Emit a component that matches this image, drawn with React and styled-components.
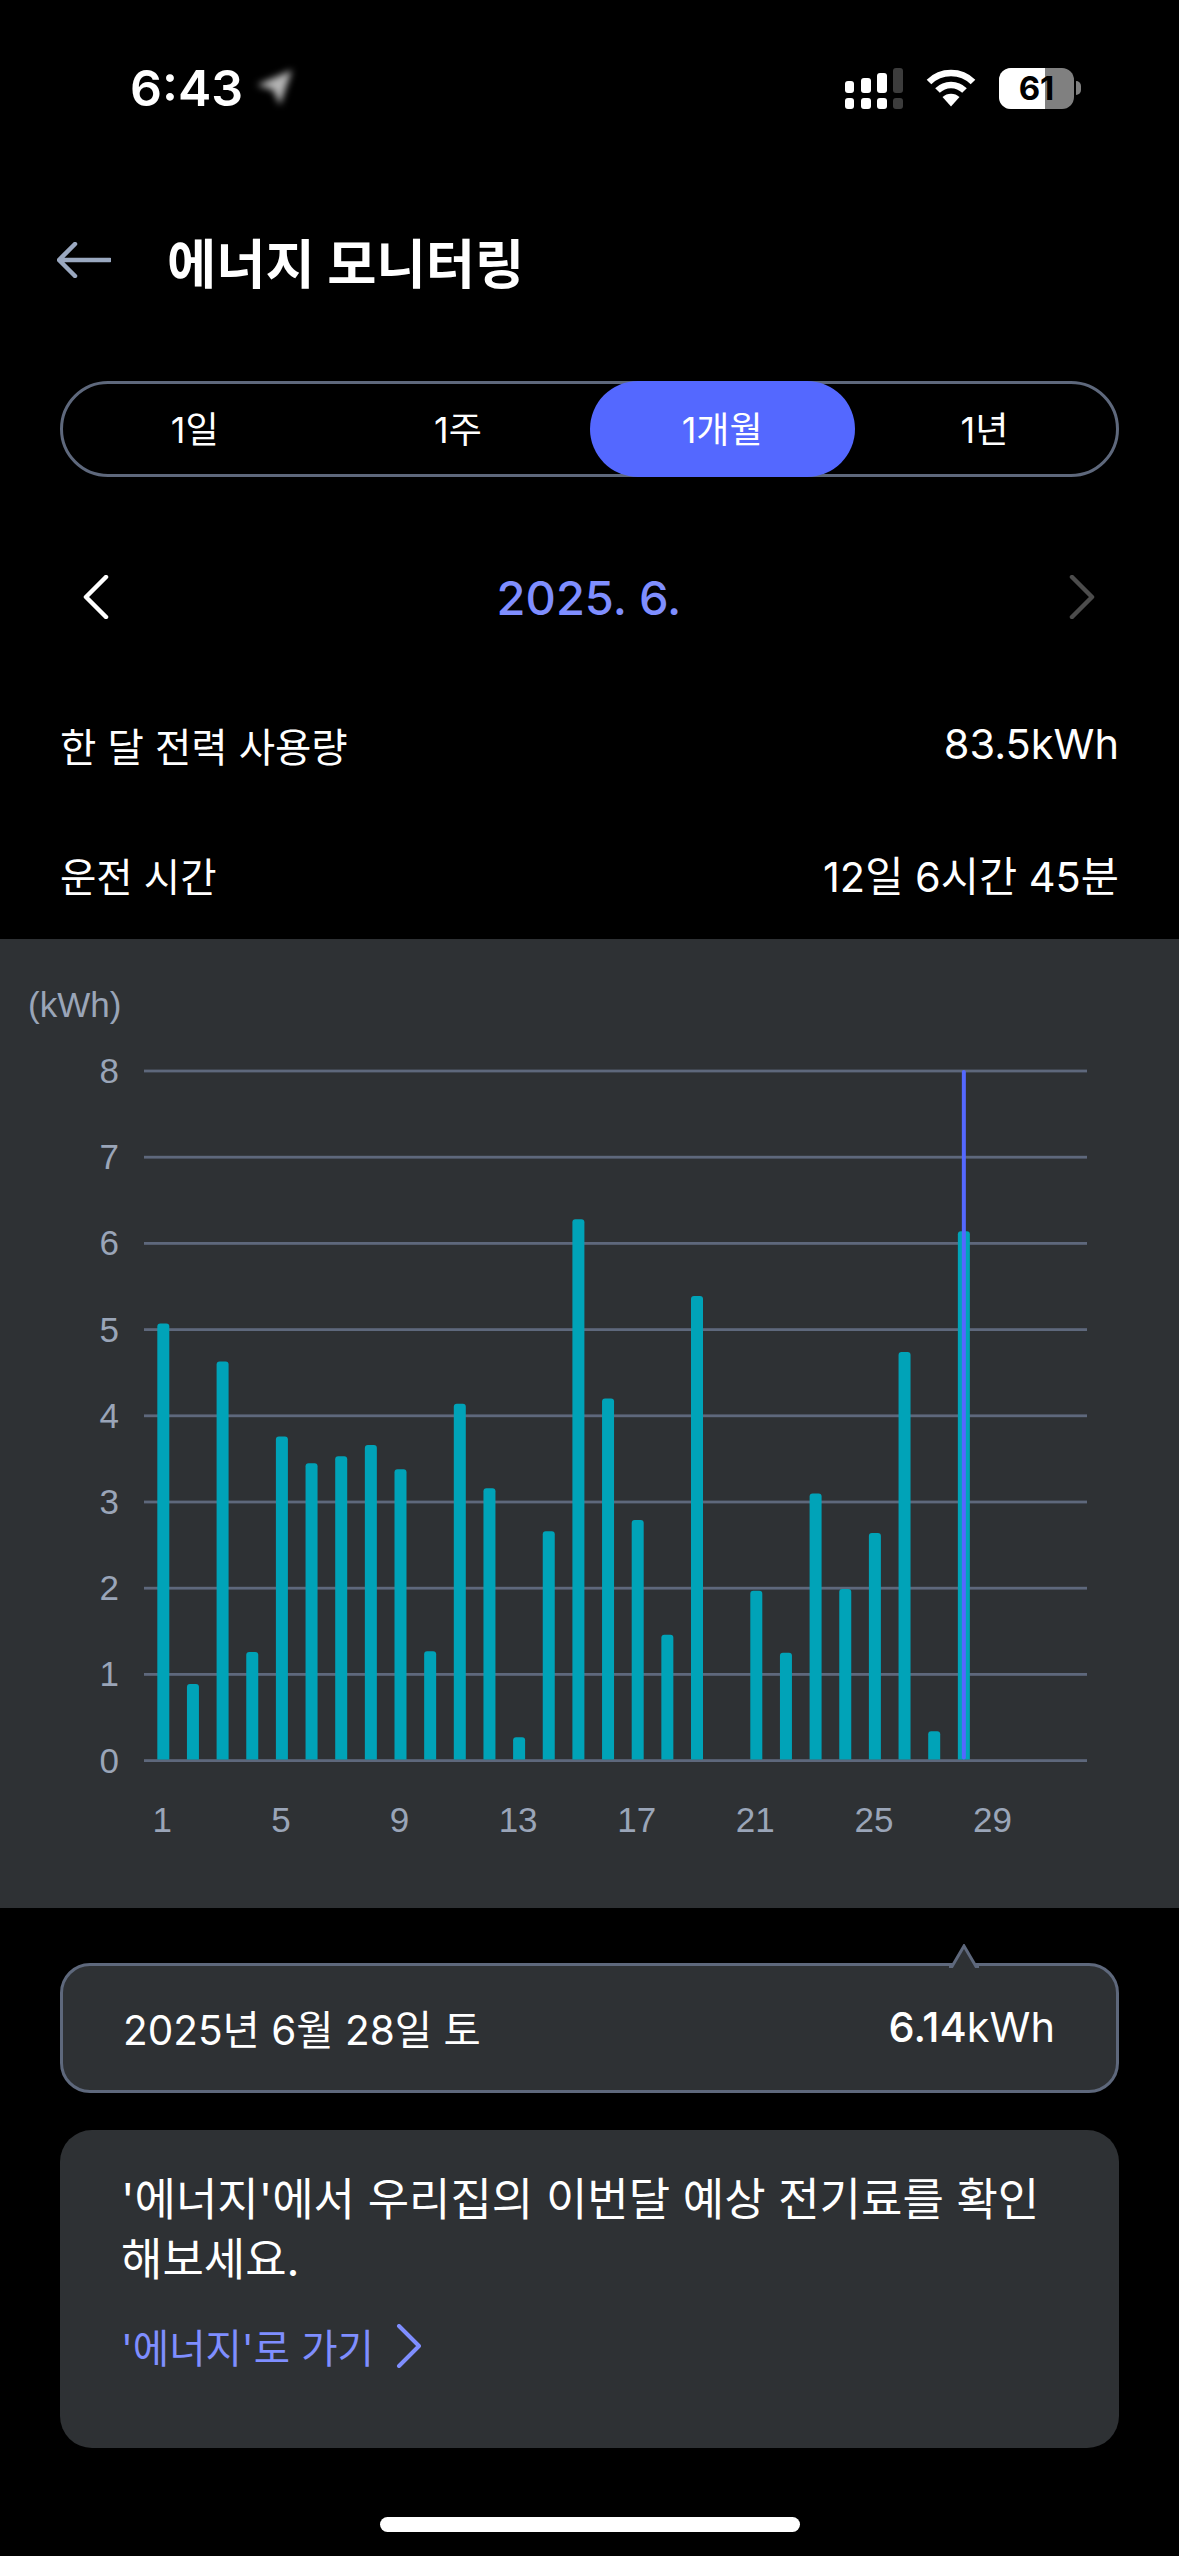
import styled, { createGlobalStyle } from "styled-components";

// Colors
const panel = "#2e3134";
const line = "#5e687c";
const blue = "#5468ff";
const lightBlue = "#7f8eff";
const muted = "#9aa5b8";
const teal = "#00a3b8";

const usage = [
  5.07, 0.89, 4.63, 1.26, 3.76, 3.45, 3.53, 3.66, 3.38, 1.27, 4.14, 3.16, 0.27, 2.66, 6.28, 4.2,
  2.79, 1.46, 5.39, 0, 1.97, 1.25, 3.1, 1.99, 2.64, 4.74, 0.34, 6.14,
];
const ticks = [0, 1, 2, 3, 4, 5, 6, 7, 8];
const days = [1, 5, 9, 13, 17, 21, 25, 29];
const tabs = ["1일", "1주", "1개월", "1년"];

// chart geometry, in px inside the panel's svg
const TOP = 44;
const UNIT = 86.2;
const BASE = TOP + UNIT * 8;
const dayX = (d) => 163.3 + 29.65 * (d - 1);

const Chart = () => (
  <ChartSvg viewBox="0 0 1179 881">
    {ticks.map((t) => (
      <g key={t}>
        <rect x="144" y={BASE - t * UNIT - 1.4} width="943" height="2.8" fill={line} />
        <YLabel x="119" y={BASE - t * UNIT + 12}>
          {t}
        </YLabel>
      </g>
    ))}
    {usage.map((v, i) =>
      v > 0 ? (
        <path
          key={i}
          fill={teal}
          d={`M${dayX(i + 1) - 6} ${BASE - 1}V${BASE - v * UNIT + 3}q0 -3 3 -3h6q3 0 3 3V${BASE - 1}z`}
        />
      ) : null
    )}
    <rect x={dayX(28) - 2} y={TOP - 1} width="4" height={UNIT * 8} rx="2" fill={blue} />
    {days.map((d) => (
      <XLabel key={d} x={dayX(d) - 1} y={BASE + 71}>
        {d}
      </XLabel>
    ))}
  </ChartSvg>
);

const App = () => {
  return (
    <Screen>
      <GlobalStyle />
      <StatusBar>
        <Clock>
          <Time>6:43</Time>
          <Blurred width="44" height="44" viewBox="0 0 44 44">
            <path d="M39 4 L4 19 L20 24 L27 39 Z" fill="#b4b4b4" />
          </Blurred>
        </Clock>
        <StatusIcons>
          <svg width="58" height="41" viewBox="0 0 58 41">
            <g fill="#fff">
              <rect x="0" y="13" width="9" height="12" rx="3" />
              <rect x="16" y="10" width="10" height="15" rx="3" />
              <rect x="32" y="5" width="10" height="20" rx="3" />
              <rect x="0" y="30" width="9" height="11" rx="3" />
              <rect x="16" y="30" width="10" height="11" rx="3" />
              <rect x="32" y="30" width="10" height="11" rx="3" />
            </g>
            <g fill="#3c3c3c">
              <rect x="48" y="0" width="10" height="25" rx="3" />
              <rect x="48" y="30" width="10" height="11" rx="3" />
            </g>
          </svg>
          <svg width="50" height="38" viewBox="0 0 50 38">
            <g fill="none" stroke="#fff" strokeWidth="6.5">
              <path d="M3 13 C15 1 35 1 47 13" />
              <path d="M11.5 21.5 C19 14 31 14 38.5 21.5" />
            </g>
            <path d="M16.5 28 C21 23.5 29 23.5 33.5 28 L25 37.5 Z" fill="#fff" />
          </svg>
          <Battery>
            <BatteryBody>
              <BatteryFill />
              <BatteryText>61</BatteryText>
            </BatteryBody>
            <BatteryNub />
          </Battery>
        </StatusIcons>
      </StatusBar>

      <Header>
        <svg width="54" height="36" viewBox="0 0 54 36">
          <path
            d="M18 2 L2 18 L18 34 M3 18 H53"
            fill="none"
            stroke="#9aa8c0"
            strokeWidth="4.5"
            strokeLinecap="round"
            strokeLinejoin="round"
          />
        </svg>
        <Title>에너지 모니터링</Title>
      </Header>

      <Tabs>
        {tabs.map((t) => (
          <Tab key={t} $active={t === "1개월"}>
            {t}
          </Tab>
        ))}
      </Tabs>

      <DateRow>
        <svg width="26" height="44" viewBox="0 0 26 44">
          <path
            d="M23 2 L3 22 L23 42"
            fill="none"
            stroke="#fff"
            strokeWidth="4.5"
            strokeLinecap="round"
            strokeLinejoin="round"
          />
        </svg>
        <DateText>2025. 6.</DateText>
        <svg width="26" height="44" viewBox="0 0 26 44">
          <path
            d="M3 2 L23 22 L3 42"
            fill="none"
            stroke="#4c4c4c"
            strokeWidth="4.5"
            strokeLinecap="round"
            strokeLinejoin="round"
          />
        </svg>
      </DateRow>

      <Summary>
        <SummaryRow>
          <SummaryLabel>한 달 전력 사용량</SummaryLabel>
          <SummaryValue>83.5kWh</SummaryValue>
        </SummaryRow>
        <SummaryRow>
          <SummaryLabel>운전 시간</SummaryLabel>
          <SummaryValue>12일 6시간 45분</SummaryValue>
        </SummaryRow>
      </Summary>

      <Panel>
        <UnitLabel>(kWh)</UnitLabel>
        <Chart />
      </Panel>

      <Tooltip>
        <TooltipArrow width="30" height="24" viewBox="0 0 30 24">
          <path d="M0 22.5 H3 L15 2 L27 22.5 H30 V24 H0 Z" fill={panel} />
          <path d="M0 22.5 H3 L15 2 L27 22.5 H30" fill="none" stroke={line} strokeWidth="3" />
        </TooltipArrow>
        <TooltipDate>2025년 6월 28일 토</TooltipDate>
        <TooltipValue>
          <Strong>6.14</Strong>kWh
        </TooltipValue>
      </Tooltip>

      <InfoCard>
        <InfoText>'에너지'에서 우리집의 이번달 예상 전기료를 확인 해보세요.</InfoText>
        <InfoLink>
          '에너지'로 가기
          <svg width="26" height="44" viewBox="0 0 26 44">
            <path
              d="M3 2 L23 22 L3 42"
              fill="none"
              stroke={lightBlue}
              strokeWidth="4"
              strokeLinecap="round"
              strokeLinejoin="round"
            />
          </svg>
        </InfoLink>
      </InfoCard>

      <HomeBar />
    </Screen>
  );
};

const GlobalStyle = createGlobalStyle`
  html, body {
    margin: 0;
    padding: 0;
    background: #000;
  }
`;

const Screen = styled.div`
  width: 1179px;
  height: 2556px;
  overflow: hidden;
  background: #000;
  color: #fff;
  font-family: Inter, "Noto Sans CJK KR", sans-serif;
`;

const StatusBar = styled.div`
  height: 176px;
  display: flex;
  align-items: center;
  justify-content: space-between;
  padding: 0 98px 0 130px;
  box-sizing: border-box;
`;

const Clock = styled.div`
  display: flex;
  align-items: center;
  gap: 10px;
`;

const Time = styled.span`
  font-size: 50px;
  font-weight: 600;
  line-height: 60px;
`;

const Blurred = styled.svg`
  filter: blur(3.5px);
`;

const StatusIcons = styled.div`
  display: flex;
  align-items: center;
  gap: 23px;
`;

const Battery = styled.div`
  display: flex;
  align-items: center;
  gap: 2px;
`;

const BatteryBody = styled.div`
  position: relative;
  width: 75px;
  height: 41px;
  border-radius: 12px;
  overflow: hidden;
  background: #808080;
`;

const BatteryFill = styled.div`
  width: 46px;
  height: 100%;
  background: #fff;
`;

const BatteryText = styled.span`
  position: absolute;
  inset: 0;
  display: flex;
  align-items: center;
  justify-content: center;
  color: #000;
  font-size: 33px;
  font-weight: 700;
`;

const BatteryNub = styled.div`
  width: 5px;
  height: 14px;
  border-radius: 0 6px 6px 0;
  background: #808080;
`;

const Header = styled.div`
  height: 170px;
  display: flex;
  align-items: center;
  gap: 56px;
  padding: 0 0 2px 57px;
  box-sizing: border-box;
`;

const Title = styled.h1`
  margin: 0;
  font-size: 53.5px;
  font-weight: 700;
`;

const Tabs = styled.div`
  margin: 35px 60px 0;
  height: 96px;
  display: grid;
  grid-template-columns: repeat(4, 1fr);
  border: 3px solid ${line};
  border-radius: 48px;
  box-sizing: border-box;
`;

const Tab = styled.div`
  margin: ${(p) => (p.$active ? "-3px -2px -3px 0" : "-3px 0")};
  padding-bottom: 4px;
  display: flex;
  align-items: center;
  justify-content: center;
  font-size: 36px;
  border-radius: 48px;
  background: ${(p) => (p.$active ? blue : "transparent")};
`;

const DateRow = styled.div`
  margin-top: 80px;
  height: 80px;
  display: flex;
  align-items: center;
  justify-content: space-between;
  padding: 0 84px 0 83px;
`;

const DateText = styled.span`
  color: ${lightBlue};
  font-size: 47px;
  font-weight: 500;
`;

const Summary = styled.div`
  margin-top: 62px;
  padding: 0 60px;
  display: flex;
  flex-direction: column;
  gap: 40px;
`;

const SummaryRow = styled.div`
  height: 90px;
  display: flex;
  align-items: center;
  justify-content: space-between;
`;

const SummaryLabel = styled.span`
  font-size: 39.5px;
`;

const SummaryValue = styled.span`
  font-size: 41.5px;
`;

const Panel = styled.div`
  margin-top: 20px;
  height: 969px;
  padding-top: 46px;
  box-sizing: border-box;
  background: ${panel};
  font-family: "Liberation Sans", Arial, sans-serif;
`;

const UnitLabel = styled.div`
  height: 42px;
  padding-left: 28px;
  color: ${muted};
  font-size: 35px;
  line-height: 40px;
`;

const ChartSvg = styled.svg`
  display: block;
  width: 1179px;
  height: 881px;
`;

const YLabel = styled.text`
  fill: ${muted};
  font-size: 35px;
  text-anchor: end;
`;

const XLabel = styled.text`
  fill: ${muted};
  font-size: 35px;
  text-anchor: middle;
`;

const Tooltip = styled.div`
  position: relative;
  margin: 55px 60px 0;
  height: 130px;
  display: flex;
  align-items: center;
  justify-content: space-between;
  padding: 0 61px 2px 60px;
  background: ${panel};
  border: 3px solid ${line};
  border-radius: 30px;
  box-sizing: border-box;
`;

const TooltipDate = styled.span`
  font-size: 40.5px;
`;

const TooltipValue = styled.span`
  font-size: 41.5px;
`;

const TooltipArrow = styled.svg`
  position: absolute;
  left: 886px;
  top: -22px;
`;

const Strong = styled.span`
  font-weight: 500;
`;

const InfoCard = styled.div`
  margin: 37px 60px 0;
  height: 318px;
  padding: 40px 61px 0;
  background: ${panel};
  border-radius: 32px;
  box-sizing: border-box;
`;

const InfoText = styled.div`
  font-size: 45px;
  line-height: 60px;
  word-break: keep-all;
`;

const InfoLink = styled.div`
  margin-top: 27px;
  display: flex;
  align-items: center;
  gap: 22px;
  color: ${lightBlue};
  font-size: 39.5px;
`;

const HomeBar = styled.div`
  margin: 69px auto 0;
  width: 420px;
  height: 15px;
  border-radius: 8px;
  background: #fff;
`;

export default App;
